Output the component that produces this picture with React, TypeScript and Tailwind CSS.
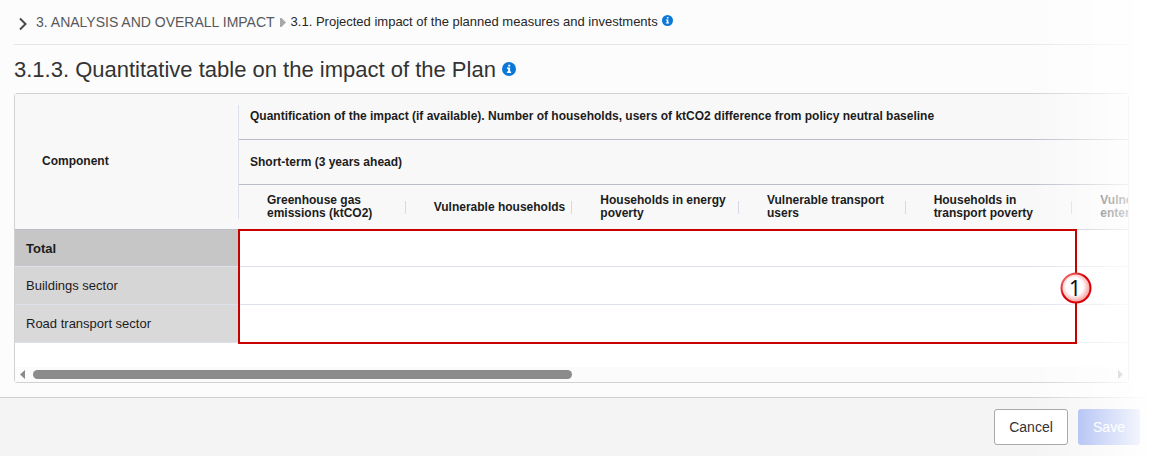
import { useState } from "react";

const columns = [
  "Greenhouse gas emissions (ktCO2)",
  "Vulnerable households",
  "Households in energy poverty",
  "Vulnerable transport users",
  "Households in transport poverty",
  "Vulnerable micro- enterprises",
];

const rows = [
  { label: "Total", className: "h-[37px] bg-[#c6c6c6] font-bold" },
  { label: "Buildings sector", className: "h-[38px] bg-[#d6d6d6] font-normal" },
  { label: "Road transport sector", className: "h-[38px] bg-[#d9d9d9] font-normal" },
];

function InfoIcon({ className }: { className: string }) {
  return (
    <svg viewBox="0 0 14 14" className={className} aria-hidden="true">
      <circle cx="7" cy="7" r="7" fill="#0b78d8" />
      <path d="M6.2 2.7h2v1.8h-2zM5 5.6h3.1v4h1v1.3H4.9V9.600h1.200V6.900H5z" fill="#fff" />
    </svg>
  );
}

function Breadcrumb() {
  return (
    <nav aria-label="Breadcrumb" className="flex h-[45px] items-center border-b border-[#e6e6e6]">
      <button type="button" aria-label="Expand navigation" className="mr-2 flex h-5 w-[14px] items-center pl-1">
        <svg viewBox="0 0 10 14" className="mt-1 h-[14px] w-[10px]" fill="none" stroke="#4a4a4a" strokeWidth="2">
          <path d="M2 1.500l5.500 5.500L2 12.500" />
        </svg>
      </button>
      <a href="#analysis" className="text-[14px] text-[#58585a]">3. ANALYSIS AND OVERALL IMPACT</a>
      <svg viewBox="0 0 6 9" className="mx-[5px] mt-px h-[9px] w-[6px]" fill="#a8a8a8" aria-hidden="true">
        <path d="M0 0h1.500L6 4.500 1.500 9H0z" />
      </svg>
      <a href="#impact" aria-current="page" className="text-[13px] text-[#262626]">
        3.1. Projected impact of the planned measures and investments
      </a>
      <InfoIcon className="mb-1 ml-1 h-[11px] w-[11px]" />
    </nav>
  );
}

function ImpactTable() {
  return (
    <div className="overflow-hidden">
      <table className="w-full min-w-[1224px] table-fixed border-separate border-spacing-0 text-left text-[12px] leading-[13px] text-[#1c1c1c]">
        <colgroup>
          <col className="w-[224px]" />
          {columns.map((column) => (
            <col key={column} />
          ))}
        </colgroup>
        <thead className="bg-[#f8f8f8]">
          <tr className="h-[46px]">
            <th rowSpan={3} scope="col" className="border-b border-[#b9bec6] p-0">
              <div className="flex h-[114px] items-center border-r border-[#dde1ee] pl-[27px]">Component</div>
            </th>
            <th colSpan={6} scope="colgroup" className="border-b border-[#b9bec6] py-0 pl-[11px]">
              Quantification of the impact (if available). Number of households, users of ktCO2 difference from policy neutral baseline
            </th>
          </tr>
          <tr className="h-[45px]">
            <th colSpan={6} scope="colgroup" className="border-b border-[#b9bec6] py-0 pl-[11px]">
              Short-term (3 years ahead)
            </th>
          </tr>
          <tr className="h-[45px]">
            {columns.map((column) => (
              <th key={column} scope="col" className="border-b border-[#b9bec6] p-0">
                <div className="flex items-center justify-between pl-7">
                  <span className="w-[134px]">{column}</span>
                  <span className="h-[13px] w-px bg-[#d5d9e8]" />
                </div>
              </th>
            ))}
          </tr>
        </thead>
        <tbody className="bg-white">
          {rows.map((row) => (
            <tr key={row.label}>
              <th scope="row" className={`border-b border-[#dde2ea] py-0 pl-[11px] text-[13px] ${row.className}`}>
                {row.label}
              </th>
              {columns.map((column) => (
                <td key={column} className="border-b border-[#dde2ea] p-0" />
              ))}
            </tr>
          ))}
        </tbody>
      </table>
    </div>
  );
}

function ScrollBar() {
  return (
    <div className="flex h-[15px] items-center bg-[#fbfbfb] px-[5px]">
      <svg viewBox="0 0 5 9" className="h-[9px] w-[5px]" fill="#8a8a8a" aria-hidden="true">
        <path d="M5 0v9L0 4.500z" />
      </svg>
      <div className="mx-2 flex-1">
        <div className="h-[9px] w-1/2 rounded-full bg-[#8b8b8b]" />
      </div>
      <svg viewBox="0 0 5 9" className="h-[9px] w-[5px]" fill="#8a8a8a" aria-hidden="true">
        <path d="M0 0v9l5-4.500z" />
      </svg>
    </div>
  );
}

// Numbered outline drawn over the editable cells
function Callout() {
  return (
    <div className="pointer-events-none absolute left-[223px] top-[135px] z-20 h-[115px] w-[839px] border-2 border-[#c80000]">
      <svg viewBox="0 0 32 32" className="absolute -right-[17px] top-[41px] h-8 w-8">
        <defs>
          <radialGradient id="badge-fill" cx="0.45" cy="0.45" r="0.58">
            <stop offset="0.5" stopColor="#fff" />
            <stop offset="1" stopColor="#f58c8c" />
          </radialGradient>
          <linearGradient id="badge-ring" x1="0" y1="0" x2="0.7" y2="0.7">
            <stop offset="0.15" stopColor="#ec6a6a" />
            <stop offset="0.6" stopColor="#d90008" />
          </linearGradient>
        </defs>
        <circle cx="16" cy="16" r="14.500" fill="url(#badge-fill)" stroke="url(#badge-ring)" strokeWidth="2" />
        <text x="15" y="24" textAnchor="middle" fontSize="21" fill="#111" fontFamily="'Noto Sans', 'Open Sans', sans-serif">1</text>
      </svg>
    </div>
  );
}

export default function App() {
  const [saving, setSaving] = useState(false);

  return (
    <div className="relative flex min-h-screen flex-col overflow-hidden bg-[#fcfcfc] font-['Liberation_Sans',Arial,sans-serif]">
      <main className="flex-1 pb-[14px] pl-[14px] pr-[23px]">
        <Breadcrumb />
        <h1 className="flex h-12 items-center text-[22px] text-[#333]">
          3.1.3. Quantitative table on the impact of the Plan
          <InfoIcon className="ml-[6px] h-[14px] w-[14px]" />
        </h1>
        <section className="relative rounded-[3px] border border-[#d2d2d2] bg-white">
          <ImpactTable />
          <div className="h-6" />
          <ScrollBar />
          <Callout />
        </section>
      </main>
      <footer className="flex justify-end gap-[10px] border-t border-[#d0d0d0] bg-[#f4f4f4] pb-3 pr-3 pt-[11px] text-[14px]">
        <button type="button" onClick={() => setSaving(false)} className="relative z-20 h-9 w-[74px] rounded-[3px] border border-[#a9a9a9] bg-white text-[#333]">
          Cancel
        </button>
        <button type="button" disabled={saving} onClick={() => setSaving(true)} className="h-9 w-[62px] rounded-[3px] bg-[#8ba2ee] text-white">
          Save
        </button>
      </footer>
      <div className="pointer-events-none absolute inset-y-0 right-0 z-10 w-[122px] bg-linear-to-r from-white/0 to-white" />
    </div>
  );
}
